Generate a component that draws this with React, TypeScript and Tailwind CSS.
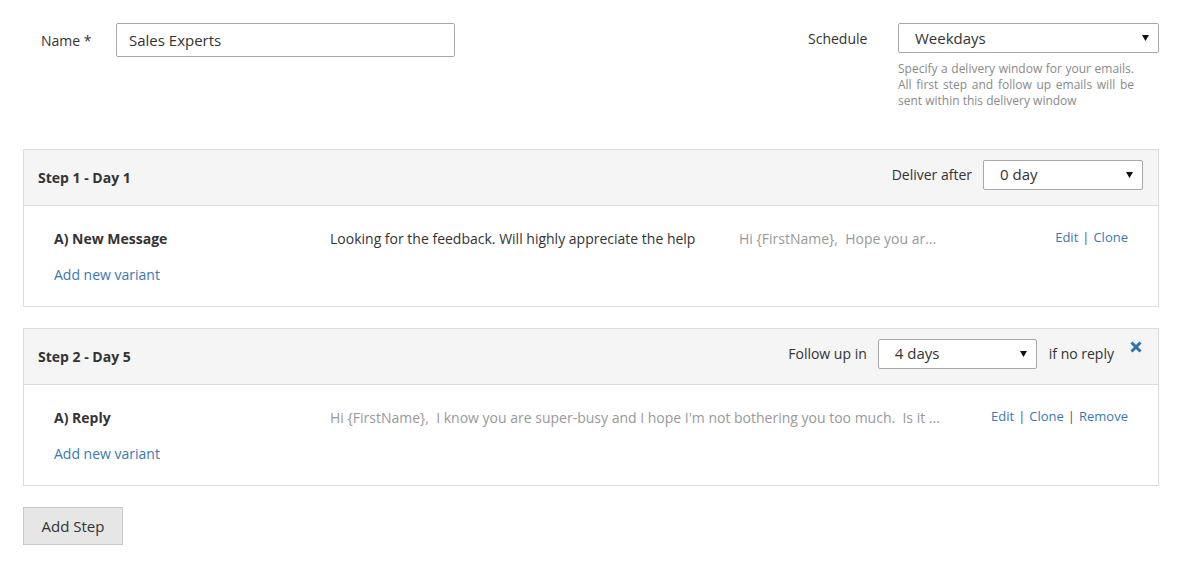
import React from 'react';

const font = { fontFamily: '"Open Sans", "Liberation Sans", sans-serif' };

function Arrow() {
  return (
    <svg width="7" height="6" viewBox="0 0 7 6" className="shrink-0">
      <path d="M0 0h7L3.5 6z" fill="#111" />
    </svg>
  );
}

function FakeSelect({ value, className }: { value: string; className: string }) {
  return (
    <div
      className={`flex h-[30px] items-center justify-between rounded-[2px] border border-[#a9a9a9] bg-white pl-[16px] pr-[9px] text-[15px] text-[#333] ${className}`}
    >
      <span>{value}</span>
      <Arrow />
    </div>
  );
}

function CloseIcon() {
  return (
    <svg width="12" height="12" viewBox="0 0 12 12" className="mt-[-14px] shrink-0">
      <path d="M1.5 1.5l9 9M10.5 1.5l-9 9" stroke="#2f73b4" strokeWidth="3" strokeLinecap="butt" />
    </svg>
  );
}

function Actions({ items }: { items: string[] }) {
  return (
    <div className="flex items-center text-[13px] text-[#3a78b3]">
      {items.map((item, i) => (
        <React.Fragment key={item}>
          {i > 0 && <span className="mx-[4px] text-[#555]">|</span>}
          <a href="#" className="hover:underline">
            {item}
          </a>
        </React.Fragment>
      ))}
    </div>
  );
}

export default function App() {
  return (
    <div className="min-h-[564px] bg-white px-[22px] pt-[23px] text-[14px] text-[#333]" style={font}>
      {/* Top form */}
      <div className="flex justify-between">
        <div className="flex h-[34px] items-center pl-[19px]">
          <label className="w-[75px] text-[14px] text-[#333]">Name *</label>
          <input
            defaultValue="Sales Experts"
            className="h-[34px] w-[339px] rounded-[2px] border border-[#a9a9a9] px-[12px] text-[15px] text-[#333] outline-none"
            style={font}
          />
        </div>
        <div className="flex">
          <div className="flex h-[30px] w-[90px] items-center text-[14px]">Schedule</div>
          <div className="w-[261px]">
            <FakeSelect value="Weekdays" className="w-[261px]" />
            <p className="mt-[8px] w-[236px] text-justify text-[12px] leading-[16px] text-[#8a8a8a]">
              Specify a delivery window for your emails. All first step and follow up emails will be sent
              within this delivery window
            </p>
          </div>
        </div>
      </div>

      {/* Step 1 */}
      <div className="ml-[1px] mt-[40px] border border-[#dcdcdc]">
        <div className="flex h-[56px] items-center justify-between border-b border-[#dcdcdc] bg-[#f5f5f5] pl-[14px] pr-[15px]">
          <span className="font-bold">Step 1 - Day 1</span>
          <div className="flex items-center pb-[6px]">
            <span className="mr-[11px]">Deliver after</span>
            <FakeSelect value="0 day" className="w-[160px]" />
          </div>
        </div>
        <div className="h-[100px] pl-[30px] pr-[30px] pt-[22px]">
          <div className="flex h-[20px] items-center">
            <span className="w-[276px] font-bold">A) New Message</span>
            <span className="w-[409px]">Looking for the feedback. Will highly appreciate the help</span>
            <span className="flex-1 whitespace-pre text-[#999]">Hi {'{FirstName}'},  Hope you ar...</span>
            <Actions items={['Edit', 'Clone']} />
          </div>
          <a href="#" className="mt-[16px] block w-fit text-[#3a78b3]">
            Add new variant
          </a>
        </div>
      </div>

      {/* Step 2 */}
      <div className="ml-[1px] mt-[21px] border border-[#dcdcdc]">
        <div className="flex h-[56px] items-center justify-between border-b border-[#dcdcdc] bg-[#f5f5f5] pl-[14px] pr-[16px]">
          <span className="font-bold">Step 2 - Day 5</span>
          <div className="flex items-center pb-[6px]">
            <span className="mr-[11px]">Follow up in</span>
            <FakeSelect value="4 days" className="w-[159px]" />
            <span className="ml-[12px] mr-[16px]">if no reply</span>
            <CloseIcon />
          </div>
        </div>
        <div className="h-[100px] pl-[30px] pr-[30px] pt-[22px]">
          <div className="flex h-[20px] items-center">
            <span className="w-[276px] font-bold">A) Reply</span>
            <span className="flex-1 whitespace-pre text-[#999]">
              Hi {'{FirstName}'},  I know you are super-busy and I hope I'm not bothering you too much.  Is it ...
            </span>
            <Actions items={['Edit', 'Clone', 'Remove']} />
          </div>
          <a href="#" className="mt-[16px] block w-fit text-[#3a78b3]">
            Add new variant
          </a>
        </div>
      </div>

      <button
        className="ml-[1px] mt-[21px] h-[38px] w-[100px] border border-[#c8c8c8] bg-[#e6e6e6] text-[15px] text-[#333]"
        style={font}
      >
        Add Step
      </button>
    </div>
  );
}
